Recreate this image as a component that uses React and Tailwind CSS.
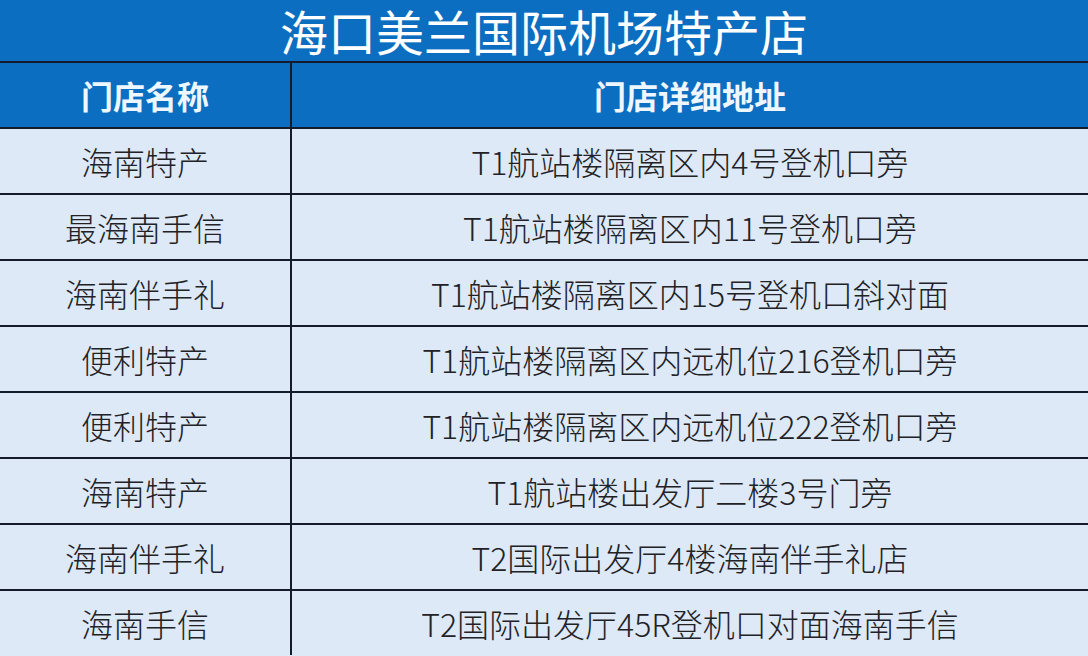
export default function App() {
  const rows = [
    ["海南特产", "T1航站楼隔离区内4号登机口旁"],
    ["最海南手信", "T1航站楼隔离区内11号登机口旁"],
    ["海南伴手礼", "T1航站楼隔离区内15号登机口斜对面"],
    ["便利特产", "T1航站楼隔离区内远机位216登机口旁"],
    ["便利特产", "T1航站楼隔离区内远机位222登机口旁"],
    ["海南特产", "T1航站楼出发厅二楼3号门旁"],
    ["海南伴手礼", "T2国际出发厅4楼海南伴手礼店"],
    ["海南手信", "T2国际出发厅45R登机口对面海南手信"],
  ];
  const font = { fontFamily: '"Noto Sans CJK SC", "Noto Sans", sans-serif' };
  return (
    <div className="w-[1088px] h-[656px] overflow-hidden bg-[#dde9f6] flex flex-col" style={font}>
      <div className="h-[61px] bg-[#0c6ec0] flex items-center justify-center text-white text-[48px] font-normal leading-[61px] shrink-0">
        海口美兰国际机场特产店
      </div>
      <div className="h-[2px] bg-[#141c2c] shrink-0" />
      <div className="h-[64px] bg-[#0c6ec0] flex shrink-0 text-[#eef6ff] text-[32px] font-bold leading-none">
        <div className="w-[290px] flex items-center justify-center">门店名称</div>
        <div className="w-[2px] bg-[#141c2c]" />
        <div className="flex-1 flex items-center justify-center">门店详细地址</div>
      </div>
      {rows.map(([a, b], i) => (
        <div key={i} className="flex flex-col shrink-0">
          <div className="h-[2px] bg-[#141c2c]" />
          <div className="h-[64px] flex text-[#222226] text-[32px] font-light leading-none">
            <div className="w-[290px] flex items-center justify-center">{a}</div>
            <div className="w-[2px] bg-[#141c2c]" />
            <div className="flex-1 flex items-center justify-center">{b}</div>
          </div>
        </div>
      ))}
    </div>
  );
}
